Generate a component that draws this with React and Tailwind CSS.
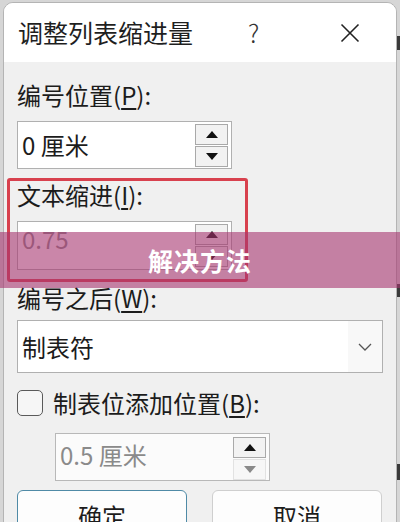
import React from "react";

const font = { fontFamily: '"Noto Sans CJK SC", "Noto Sans", sans-serif' };

function Tri({ up, color = "#111" }) {
  return (
    <svg width="12" height="7" viewBox="0 0 12 7">
      {up ? (
        <polygon points="6,0 12,7 0,7" fill={color} />
      ) : (
        <polygon points="0,0 12,0 6,7" fill={color} />
      )}
    </svg>
  );
}

function Spinner({ disabled }) {
  return (
    <div className="flex flex-col gap-[1px] w-[33px]">
      <div className="h-[21px] flex items-center justify-center bg-[#f2f2f2] border border-[#a9a9a9]">
        <Tri up />
      </div>
      <div
        className={
          disabled
            ? "h-[21px] flex items-center justify-center bg-[#f7f7f7] border border-[#e2e2e2]"
            : "h-[21px] flex items-center justify-center bg-[#f2f2f2] border border-[#a9a9a9]"
        }
      >
        <Tri up={false} color={disabled ? "#8a8a8a" : "#111"} />
      </div>
    </div>
  );
}

function Label({ pre, u, className = "" }) {
  return (
    <div className={"text-[24px] leading-none text-[#1c1c1c] " + className}>
      {pre}(<span className="underline underline-offset-[3px] decoration-[1.5px]">{u}</span>):
    </div>
  );
}

export default function App() {
  return (
    <div
      className="relative w-[400px] h-[522px] overflow-hidden bg-[#d6d6d6]"
      style={font}
    >
      <div className="absolute top-0 left-0 w-[400px] h-[522px] pointer-events-none">
        <div className="absolute right-0 top-[36px] w-[3px] h-[14px] bg-[#3a3a3a]" />
        <div className="absolute right-0 top-[284px] w-[3px] h-[13px] bg-[#3a3a3a]" />
        <div className="absolute right-0 top-[464px] w-[3px] h-[16px] bg-[#3a3a3a]" />
      </div>

      <div className="ml-[3px] mt-[2px] w-[394px] h-[540px] rounded-t-[10px] border border-[#b4b4b4] bg-[#f0f0f0] overflow-hidden">
        {/* Title bar */}
        <div className="h-[59px] bg-white flex items-center pl-[14px]">
          <div className="text-[25px] leading-none text-[#1f1f1f] w-[230px]">调整列表缩进量</div>
          <div className="text-[25px] leading-none text-[#333] font-light w-[90px]">?</div>
          <svg width="20" height="20" viewBox="0 0 20 20" className="ml-[2px]">
            <path d="M1.5 1.5 L18.5 18.5 M18.5 1.5 L1.5 18.5" stroke="#222" strokeWidth="1.6" fill="none" />
          </svg>
        </div>

        {/* Body */}
        <div className="pl-[13px] flex flex-col">
          <Label pre="编号位置" u="P" className="mt-[21px]" />
          <div className="mt-[14px] w-[215px] h-[48px] bg-white border border-[#b0b0b0] flex items-center justify-between pl-[4px] pr-[3px]">
            <span className="text-[24px] leading-none text-[#1c1c1c]">0 厘米</span>
            <Spinner />
          </div>

          <Label pre="文本缩进" u="I" className="mt-[14px]" />
          <div className="mt-[14px] w-[215px] h-[49px] bg-white border border-[#b0b0b0] flex items-start justify-between pl-[4px] pr-[3px] pt-[2px]">
            <span className="text-[24px] leading-none text-[#8a8a8a] mt-[3px]">0.75</span>
            <Spinner />
          </div>

          <Label pre="编号之后" u="W" className="mt-[16px]" />
          <div className="mt-[10px] w-[366px] h-[53px] bg-white border border-[#b0b0b0] flex items-center justify-between pl-[4px]">
            <span className="text-[24px] leading-none text-[#1c1c1c]">制表符</span>
            <div className="w-[34px] h-full bg-[#f8f8f8] flex items-center justify-center">
              <svg width="14" height="8" viewBox="0 0 14 8">
                <path d="M1 1 L7 7 L13 1" stroke="#555" strokeWidth="1.3" fill="none" />
              </svg>
            </div>
          </div>

          <div className="mt-[17px] flex items-center">
            <div className="w-[26px] h-[26px] rounded-[5px] border-[1.5px] border-[#5a5a5a] bg-[#f6f6f6]" />
            <Label pre="制表位添加位置" u="B" className="ml-[10px]" />
          </div>

          <div className="mt-[17px] ml-[38px] w-[215px] h-[48px] bg-[#fbfbfb] border border-[#b8b8b8] flex items-start justify-between pl-[4px] pr-[3px] pt-[3px]">
            <span className="text-[24px] leading-none text-[#8a8a8a] mt-[6px]">0.5 厘米</span>
            <Spinner disabled />
          </div>

          <div className="mt-[9px] flex gap-[25px]">
            <div className="w-[170px] h-[50px] rounded-[6px] border-[1.5px] border-[#4f8aa6] bg-[#fdfdfd] flex items-start justify-center pt-[13px]">
              <span className="text-[24px] leading-none text-[#1c1c1c]">确定</span>
            </div>
            <div className="w-[170px] h-[50px] rounded-[6px] border border-[#cfcfcf] bg-[#fdfdfd] flex items-start justify-center pt-[13px]">
              <span className="text-[24px] leading-none text-[#1c1c1c]">取消</span>
            </div>
          </div>
        </div>
      </div>

      {/* red annotation box */}
      <div className="absolute left-[7px] top-[178px] w-[241px] h-[104px] border-[3px] border-[#d8414e] rounded-[3px] pointer-events-none" />

      {/* pink overlay band */}
      <div className="absolute left-0 top-[232px] w-[400px] h-[56px] bg-[rgba(167,53,112,0.6)] flex items-center justify-center pointer-events-none">
        <span className="text-[25px] font-bold text-white leading-none tracking-[1px]">解决方法</span>
      </div>
    </div>
  );
}
